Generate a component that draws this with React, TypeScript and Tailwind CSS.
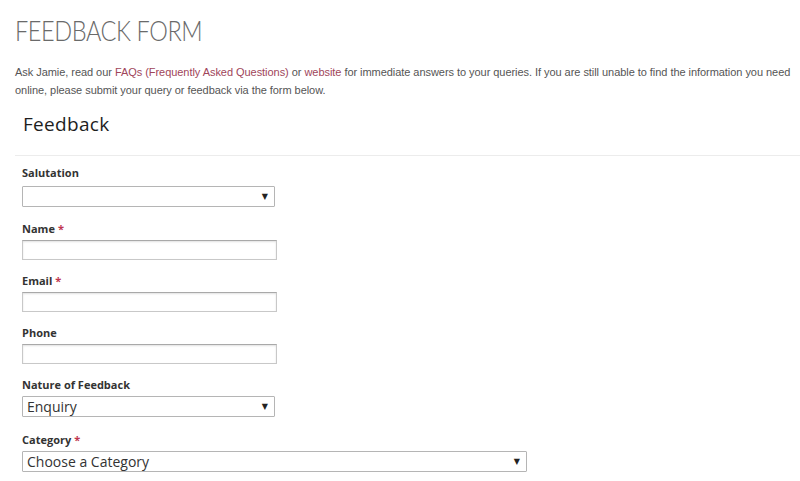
import React from "react";

const labelCls =
  "block h-[16px] text-[11px] leading-[16px] font-bold text-[#333] font-['Open_Sans',sans-serif]";

const Req = () => <span className="text-[#c0354f] ml-[3px]">*</span>;

const Arrow = () => (
  <span className="text-[8px] leading-none text-[#222] font-['DejaVu_Sans',sans-serif]">▼</span>
);

const TextInput = () => (
  <div className="h-[20px] w-[255px] border border-[#c8c8c8] border-t-[#a9a9a9] bg-white shadow-[inset_0_1px_2px_rgba(0,0,0,0.12)]" />
);

const SelectBox = ({ value, wide }: { value?: string; wide?: boolean }) => (
  <div
    className={
      "h-[21px] border border-[#b5b5b5] bg-white flex items-center justify-between pl-[4px] pr-[6px] rounded-[1px] " +
      (wide ? "w-[505px]" : "w-[253px]")
    }
  >
    <span className="text-[14px] leading-[19px] text-[#333] font-['Open_Sans',sans-serif]">
      {value}
    </span>
    <Arrow />
  </div>
);

const App = () => {
  return (
    <div className="min-h-screen bg-white px-[15px] pt-[13px] font-['Liberation_Sans',Arial,sans-serif]">
      <h1 className="text-[28px] leading-[34px] font-light text-[#6a6a6a] font-['Lato',sans-serif] origin-left scale-x-[0.84] tracking-[-0.5px] whitespace-nowrap">
        FEEDBACK FORM
      </h1>
      <p className="mt-[16px] w-[785px] text-[11px] leading-[18px] text-[#555] tracking-[-0.05px]">
        Ask Jamie, read our{" "}
        <a className="text-[#a0455a]">FAQs (Frequently Asked Questions)</a> or{" "}
        <a className="text-[#a0455a]">website</a> for immediate answers to your queries. If
        you are still unable to find the information you need online, please submit your
        query or feedback via the form below.
      </p>
      <h2 className="mt-[11px] pl-[8px] text-[19px] leading-[28px] text-[#1e1e1e] font-['Open_Sans',sans-serif] tracking-[0.3px]">
        Feedback
      </h2>
      <div className="mt-[17px] h-px bg-[#ececec] -mr-[15px]" />
      <form className="pl-[7px] pt-[9px]">
        <label className={labelCls}>Salutation</label>
        <div className="mt-[5px]">
          <SelectBox />
        </div>
        <label className={labelCls + " mt-[14px]"}>
          Name
          <Req />
        </label>
        <div className="mt-[3px]">
          <TextInput />
        </div>
        <label className={labelCls + " mt-[13px]"}>
          Email
          <Req />
        </label>
        <div className="mt-[3px]">
          <TextInput />
        </div>
        <label className={labelCls + " mt-[13px]"}>Phone</label>
        <div className="mt-[3px]">
          <TextInput />
        </div>
        <label className={labelCls + " mt-[13px]"}>Nature of Feedback</label>
        <div className="mt-[3px]">
          <SelectBox value="Enquiry" />
        </div>
        <label className={labelCls + " mt-[15px]"}>
          Category
          <Req />
        </label>
        <div className="mt-[3px]">
          <SelectBox value="Choose a Category" wide />
        </div>
      </form>
    </div>
  );
};

export default App;
